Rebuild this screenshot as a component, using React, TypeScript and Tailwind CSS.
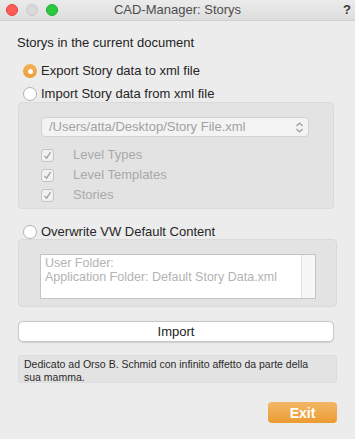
import React, { useState } from "react";

const font = { fontFamily: '"Liberation Sans", Arial, sans-serif' };

function Radio({ checked, label }: { checked: boolean; label: string }) {
  return (
    <div className="flex items-center h-[16px]">
      {checked ? (
        <div className="w-[14px] h-[14px] rounded-full bg-gradient-to-b from-[#f2b25a] to-[#eb9d33] flex items-center justify-center">
          <div className="w-[5px] h-[5px] rounded-full bg-white" />
        </div>
      ) : (
        <div className="w-[14px] h-[14px] rounded-full bg-white border border-[#b3b3b3]" />
      )}
      <span className="ml-[4px] text-[13px] leading-[16px] text-[#262626]">{label}</span>
    </div>
  );
}

function Check({ label }: { label: string }) {
  return (
    <div className="flex items-center h-[14px]">
      <div className="w-[13px] h-[13px] rounded-[3px] border border-[#c4c4c4] bg-[#f1f1f1] flex items-center justify-center">
        <svg width="9" height="9" viewBox="0 0 9 9">
          <path d="M1.5 4.8 L3.6 7.2 L7.6 1.2" fill="none" stroke="#9c9c9c" strokeWidth="1.2" />
        </svg>
      </div>
      <span className="ml-[19px] text-[13px] leading-[16px] text-[#a9a9a9]">{label}</span>
    </div>
  );
}

export default function App() {
  const [mode] = useState(1);

  return (
    <div className="w-[355px] h-[439px] bg-[#ececec] overflow-hidden" style={font}>
      <div className="h-[21px] bg-gradient-to-b from-[#ebebeb] to-[#dedede] border-b border-[#cfcfcf] grid grid-cols-[1fr_auto_1fr] items-center">
        <div className="flex items-center gap-[8px] pl-[6px]">
          <div className="w-[12px] h-[12px] rounded-full bg-[#fd5d56] border border-[#e3463f]" />
          <div className="w-[12px] h-[12px] rounded-full bg-[#d9d9d9] border border-[#c9c9c9]" />
          <div className="w-[12px] h-[12px] rounded-full bg-[#2bc840] border border-[#20ad33]" />
        </div>
        <div className="text-[13px] leading-[16px] text-[#4d4d4d]">CAD-Manager: Storys</div>
        <div className="flex justify-end pr-[4px]">
          <span className="text-[13px] leading-[16px] font-bold text-[#3a3a3a]">?</span>
        </div>
      </div>

      <div className="px-[18px]">
        <div className="mt-[14px] text-[13px] leading-[16px] text-[#1e1e1e] -ml-[1px]">Storys in the current document</div>

        <div className="mt-[12px] ml-[5px]">
          <Radio checked={mode === 1} label="Export Story data to xml file" />
        </div>
        <div className="mt-[7px] ml-[5px]">
          <Radio checked={mode === 2} label="Import Story data from xml file" />
        </div>

        <div className="w-[316px] h-[107px] bg-[#e3e3e3] border border-[#dadada] rounded-[4px] pt-[14px] pl-[22px]">
          <div className="w-[268px] h-[20px] bg-[#f3f3f3] border border-[#d2d2d2] rounded-[4px] flex items-center justify-between pl-[7px] pr-[4px]">
            <span className="text-[13px] leading-[16px] text-[#a2a2a2]">/Users/atta/Desktop/Story File.xml</span>
            <svg width="9" height="13" viewBox="0 0 9 13">
              <path d="M1.5 5 L4.5 2 L7.5 5 M1.5 8 L4.5 11 L7.5 8" fill="none" stroke="#9a9a9a" strokeWidth="1.1" />
            </svg>
          </div>
          <div className="mt-[11px] flex flex-col gap-[6px]">
            <Check label="Level Types" />
            <Check label="Level Templates" />
            <Check label="Stories" />
          </div>
        </div>

        <div className="mt-[15px] ml-[5px]">
          <Radio checked={mode === 3} label="Overwrite VW Default Content" />
        </div>

        <div className="-mt-[1px] w-[319px] h-[68px] bg-[#e3e3e3] border border-[#dadada] rounded-[4px] pt-[14px] pl-[21px]">
          <div className="w-[276px] h-[45px] bg-white border border-[#c4c4c4] flex">
            <div className="flex-1 pl-[4px] pt-[1px] text-[12.5px] leading-[14px] text-[#b3b3b3]">
              <div>User Folder:</div>
              <div>Application Folder: Default Story Data.xml</div>
            </div>
            <div className="w-[14px] bg-[#f7f7f7] border-l border-[#e2e2e2]" />
          </div>
        </div>

        <button className="mt-[14px] w-[316px] h-[21px] bg-white border border-[#c8c8c8] rounded-[5px] text-[13px] leading-[16px] text-[#222] flex items-center justify-center shadow-[0_0.5px_1px_rgba(0,0,0,0.12)]">
          Import
        </button>

        <div className="mt-[13px] w-[319px] h-[28px] bg-[#e3e3e3] border border-[#dcdcdc] rounded-[3px] px-[5px] pt-[2px] text-[10.5px] leading-[13px] text-[#2a2a2a]">
          <div className="w-[302px]">Dedicato ad Orso B. Schmid con infinito affetto da parte della sua mamma.</div>
        </div>

        <div className="flex justify-end mt-[19px]">
          <button className="w-[69px] h-[21px] rounded-[4px] bg-gradient-to-b from-[#f3b665] to-[#eb9c2f] text-white text-[14px] leading-[16px] font-bold flex items-center justify-center">
            Exit
          </button>
        </div>
      </div>
    </div>
  );
}
